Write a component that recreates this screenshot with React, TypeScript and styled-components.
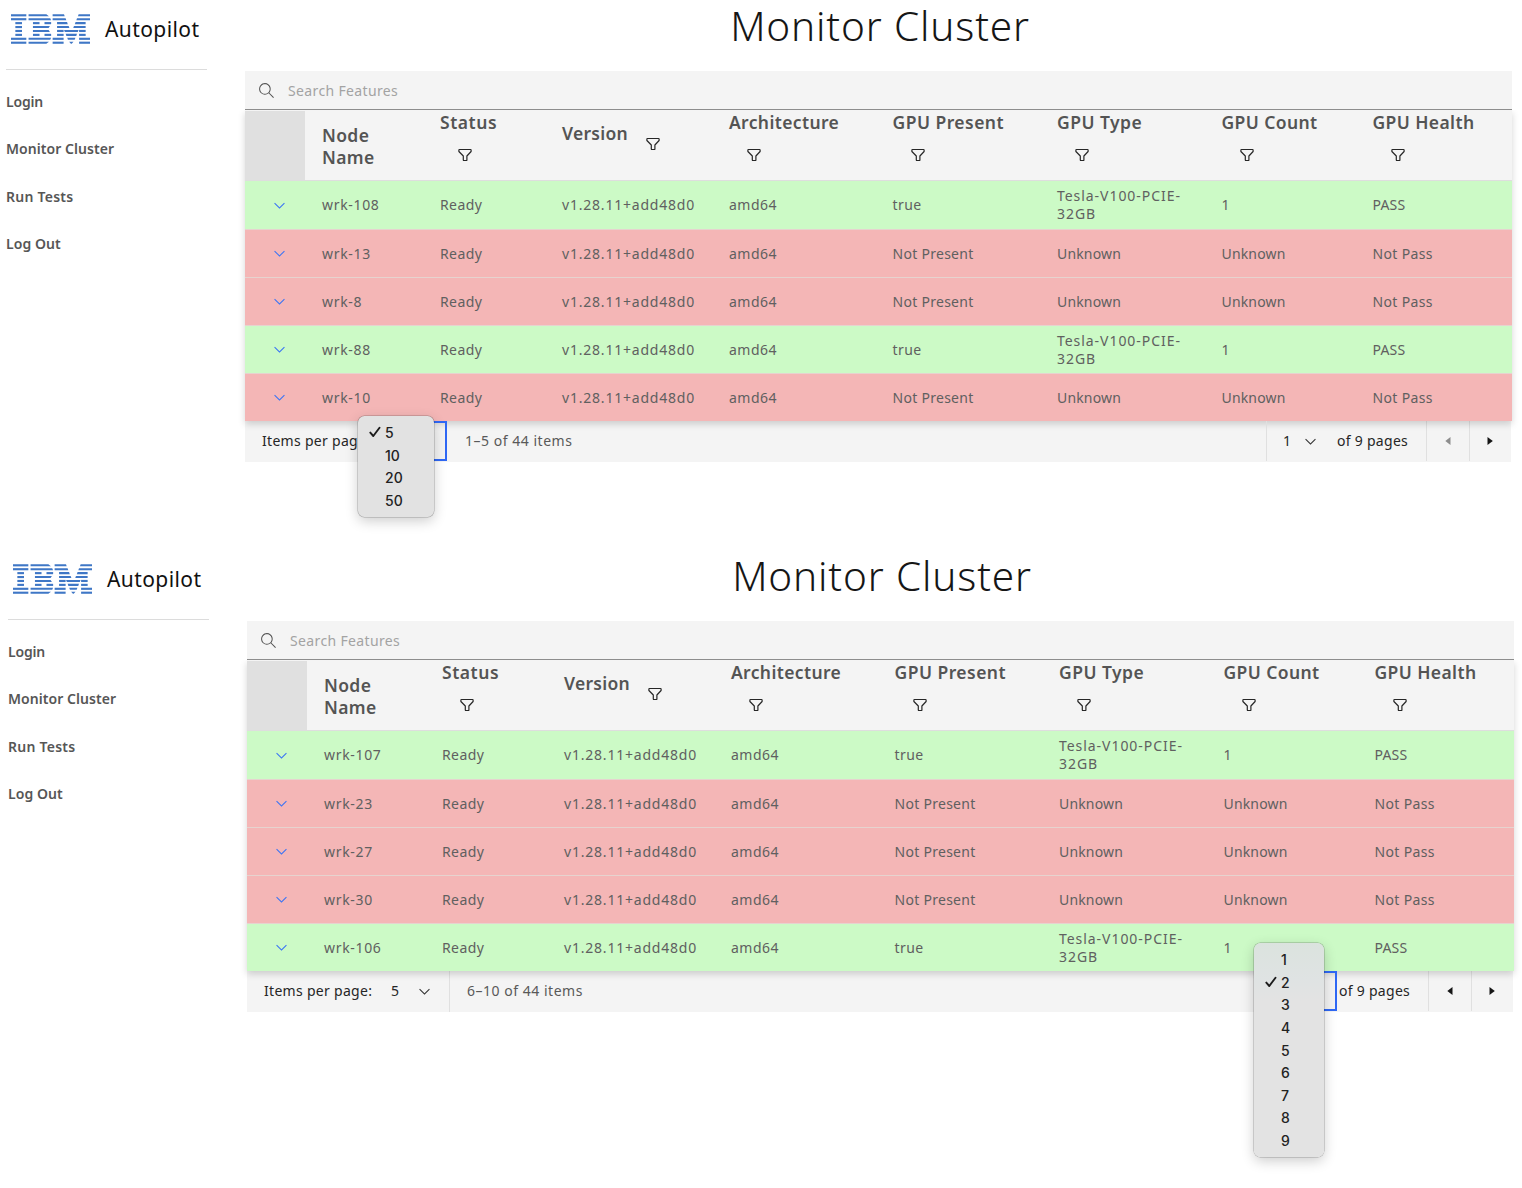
import React from "react";
import styled, { createGlobalStyle } from "styled-components";

const sans = `"Noto Sans", "Open Sans", sans-serif`;

const GlobalStyle = createGlobalStyle`
  *, *::before, *::after { box-sizing: border-box; }
  body { margin: 0; background: #fff; font-family: ${sans}; font-size: 14px; color: #161616; }
`;

const Page = styled.div`
  width: 1522px;
  height: 1188px;
  overflow: hidden;
`;

const Screen = styled.section<{ $indent: number; $height: number }>`
  display: grid;
  grid-template-columns: 201px 1267px;
  column-gap: 38px;
  height: ${p => p.$height}px;
  padding-left: ${p => 6 + p.$indent}px;
`;

/* Sidebar */
const Brand = styled.header`
  display: flex;
  align-items: center;
  height: 70px;
  padding: 0 0 11px 5px;
  border-bottom: 1px solid #dcdcdc;
  svg { flex: none; }
`;

const BrandName = styled.span`
  margin-left: 15px;
  font-size: 21px;
  letter-spacing: 0.42px;
  color: #111;
`;

const Nav = styled.nav`
  display: flex;
  flex-direction: column;
  padding-top: 8px;
`;

const NavLink = styled.a<{ $tracking?: number }>`
  height: 47.3px;
  line-height: 47.3px;
  font-size: 14px;
  font-weight: 600;
  letter-spacing: ${p => p.$tracking ?? 0}px;
  color: #565656;
`;

/* Main column */
const Title = styled.h1`
  margin: 0;
  height: 71px;
  padding-left: 3px;
  line-height: 52px;
  text-align: center;
  font-size: 40.5px;
  font-weight: 300;
  letter-spacing: 0.86px;
  color: #161616;
`;

const SearchBar = styled.div`
  display: flex;
  align-items: center;
  gap: 13px;
  height: 39px;
  padding-left: 13px;
  background: #f4f4f4;
  border-bottom: 1px solid #8d8d8d;
`;

const Placeholder = styled.span`
  letter-spacing: 0.36px;
  color: #a3a3a3;
`;

const Table = styled.div`
  position: relative;
  background: #f4f4f4;
  box-shadow: 0 3px 7px rgba(0, 0, 0, 0.17);
  clip-path: inset(0 -12px -14px -12px);
`;

const columns = "60px 118px 122px 167px 163.5px 164.5px 164.5px 151px 1fr";

const HeadRow = styled.div`
  display: grid;
  grid-template-columns: ${columns};
  height: 71px;
  padding-top: 1px;
  border-bottom: 1px solid #dedede;
`;

const ExpandHead = styled.div`
  background: #e0e0e0;
`;

const HeadCell = styled.div<{ $inline?: boolean }>`
  display: flex;
  flex-direction: ${p => (p.$inline ? "row" : "column")};
  gap: ${p => (p.$inline ? "17px" : "14px")};
  padding: ${p => (p.$inline ? "11px 0 0 17px" : "0 0 0 17px")};
`;

const HeadLabel = styled.span<{ $tracking: number }>`
  line-height: 22px;
  font-size: 17.5px;
  font-weight: 600;
  letter-spacing: ${p => p.$tracking}px;
  color: #545454;
`;

const NameHead = styled(HeadCell)`
  padding: 13px 60px 0 17px;
`;

const FilterSlot = styled.span<{ $inline?: boolean }>`
  display: block;
  height: 16px;
  margin: ${p => (p.$inline ? "14px 0 0 0" : "0 0 0 17px")};
  svg { display: block; }
`;

const Row = styled.div<{ $healthy: boolean }>`
  display: grid;
  grid-template-columns: ${columns};
  align-items: center;
  height: 48px;
  background: ${p => (p.$healthy ? "#ccfac6" : "#f4b6b6")};
  & + & { border-top: 1px solid #e6d3cf; }
`;

const ExpandCell = styled.div`
  display: flex;
  padding-left: 26px;
`;

const Cell = styled.div<{ $tracking: number }>`
  padding-left: 17px;
  line-height: 18px;
  letter-spacing: ${p => p.$tracking}px;
  color: #606060;
`;

/* Pagination */
const Pager = styled.footer`
  display: flex;
  width: 1266px;
  height: 40.5px;
  line-height: 40px;
  background: #f4f4f4;
  white-space: nowrap;
`;

const PerPage = styled.div<{ $open: boolean }>`
  display: flex;
  width: 203px;
  padding-left: 17px;
  border-right: 1px solid ${p => (p.$open ? "transparent" : "#e0e0e0")};
`;

const PagerLabel = styled.span<{ $width: number }>`
  width: ${p => p.$width}px;
  letter-spacing: 0.3px;
  color: #262626;
`;

const Range = styled.span`
  flex: 1;
  padding-left: 17px;
  letter-spacing: 0.52px;
  color: #595959;
`;

const SelectBox = styled.div<{ $width: number; $open: boolean; $divider?: boolean }>`
  position: relative;
  z-index: 2;
  display: flex;
  flex: none;
  align-items: center;
  justify-content: space-between;
  width: ${p => p.$width}px;
  height: 40px;
  padding: 0 16px;
  border-left: 1px solid ${p => (p.$divider ? "#e0e0e0" : "transparent")};
  box-shadow: ${p => (p.$open ? "inset 0 0 0 2px #2f68f5" : "none")};
  color: #262626;
`;

const Menu = styled.ul<{ $width: number; $top: number; $tint?: boolean }>`
  position: absolute;
  left: -15px;
  top: ${p => p.$top}px;
  width: ${p => p.$width}px;
  margin: 0;
  padding: 6px 0 5px;
  list-style: none;
  border-radius: 6.5px;
  background: ${p => (p.$tint ? "linear-gradient(#dbe3de, #dfe3e3 36px, #e3e3e3 58px)" : "#e2e2e2")};
  box-shadow: 0 0 0 0.5px rgba(0, 0, 0, 0.28), 0 4px 13px rgba(0, 0, 0, 0.2);
`;

const MenuItem = styled.li`
  display: grid;
  grid-template-columns: 16px 1fr;
  align-items: center;
  height: 22.6px;
  padding-left: 11px;
  line-height: 22px;
  font-family: Inter, "Liberation Sans", sans-serif;
  font-size: 14px;
  font-weight: 500;
  color: #222;
`;

const PageCount = styled.span`
  width: 91px;
  padding-left: 2px;
  letter-spacing: 0.28px;
  color: #262626;
`;

const PageButton = styled.span<{ $disabled?: boolean }>`
  display: flex;
  align-items: center;
  justify-content: center;
  width: 42.5px;
  height: 40px;
  border-left: 1px solid #e0e0e0;
  color: ${p => (p.$disabled ? "#8d8d8d" : "#161616")};
`;

/* Striped logo: bars per letter as [row, x1, x2, taper at x1, taper at x2] */
const bars: number[][] = [
  [0, 0, 194, 0, 0], [1, 0, 194, 0, 0], [2, 55, 139, 0, 0], [3, 55, 139, 0, 0],
  [4, 55, 139, 0, 0], [5, 55, 139, 0, 0], [6, 0, 194, 0, 0], [7, 0, 194, 0, 0],
  [0, 222, 448, 0, 32], [1, 222, 497, 0, 10], [2, 278, 361, 0, 0], [2, 424, 508, 0, 0],
  [3, 278, 492, 0, -16], [4, 278, 476, 0, 16], [5, 278, 361, 0, 0], [5, 424, 508, 0, 0],
  [6, 222, 507, 0, -10], [7, 222, 480, 0, -32],
  [0, 527, 671, 0, 9], [0, 856, 1000, -9, 0], [1, 527, 691, 0, 9], [1, 836, 1000, -9, 0],
  [2, 583, 710, 0, 9], [2, 817, 945, -9, 0], [3, 583, 730, 0, 9], [3, 797, 945, -9, 0],
  [4, 583, 666, 0, 0], [4, 672, 855, 9, -9], [4, 862, 945, 0, 0],
  [5, 583, 666, 0, 0], [5, 692, 835, 9, -9], [5, 862, 945, 0, 0],
  [6, 527, 666, 0, 0], [6, 712, 815, 9, -9], [6, 862, 1000, 0, 0],
  [7, 527, 666, 0, 0], [7, 736, 791, 22, -22], [7, 862, 1000, 0, 0],
];

const Logo = () => (
  <svg width="79" height="30" viewBox="0 0 1000 380" preserveAspectRatio="none" fill="#3f77c6">
    {bars.map(([r, a, b, ta, tb], i) => {
      const y = r * 49.6 + 3;
      return <path key={i} d={`M${a} ${y}H${b}L${b + tb} ${y + 27}H${a + ta}Z`} />;
    })}
  </svg>
);

const SearchIcon = () => (
  <svg width="17" height="17" viewBox="0 0 16 16" fill="#525252">
    <path d="M15,14.3L10.7,10c1.9-2.3,1.6-5.8-0.7-7.7S4.2,0.7,2.3,3S0.7,8.8,3,10.7c2,1.7,5,1.7,7,0l4.3,4.3L15,14.3z M2,6.5C2,4,4,2,6.5,2S11,4,11,6.5S9,11,6.5,11S2,9,2,6.5z" />
  </svg>
);

const Chevron = ({ color }: { color: string }) => (
  <svg width="17" height="17" viewBox="0 0 16 16" fill={color}>
    <path d="M8 11L3 6 3.7 5.3 8 9.6 12.3 5.3 13 6z" />
  </svg>
);

const FilterIcon = () => (
  <svg width="16" height="16" viewBox="0 0 16 16" fill="none" stroke="#262626" strokeWidth="1.2" strokeLinejoin="round">
    <path d="M2.5 2.5H13.5Q14.1 2.5 14.1 3.1V4.5L9.9 9V12.9Q9.9 13.5 9.3 13.5H7Q6.3 13.5 6.3 12.9V9L1.9 4.5V3.1Q1.9 2.5 2.5 2.5Z" />
  </svg>
);

const Check = () => (
  <svg width="12" height="12" viewBox="0 0 12 12" fill="none" stroke="#1c1c1c" strokeWidth="1.9" strokeLinecap="round" strokeLinejoin="round">
    <path d="M1.3 6.6L4.3 10L10.5 1.8" />
  </svg>
);

const Caret = ({ back }: { back?: boolean }) => (
  <svg width="6" height="8" viewBox="0 0 6 8" fill="currentColor">
    <path d={back ? "M5.5 0V8L0.3 4Z" : "M0.5 0V8L5.8 4Z"} />
  </svg>
);

const heads: [string, number][] = [
  ["Status", 0.55], ["Version", 0.28], ["Architecture", 0.36], ["GPU Present", 0.46],
  ["GPU Type", 0.46], ["GPU Count", 0.4], ["GPU Health", 0.4],
];

const tracking: Record<string, number> = {
  "v1.28.11+add48d0": 0.79, "Tesla-V100-PCIE-32GB": 0.95, amd64: 0.5, Unknown: 0.17,
  "Not Present": 0.28, "Not Pass": 0.35, PASS: 0.2, Ready: 0.4, true: 0.45,
};

type Node = { name: string; healthy: boolean };

const gpuNode = (name: string): Node => ({ name, healthy: true });
const bareNode = (name: string): Node => ({ name, healthy: false });

const describe = ({ name, healthy }: Node) => [
  name, "Ready", "v1.28.11+add48d0", "amd64",
  ...(healthy ? ["true", "Tesla-V100-PCIE-32GB", "1", "PASS"] : ["Not Present", "Unknown", "Unknown", "Not Pass"]),
];

function Options({ values, selected, width, top, tint }: { values: number[]; selected: number; width: number; top: number; tint?: boolean }) {
  return (
    <Menu $width={width} $top={top} $tint={tint}>
      {values.map(v => (
        <MenuItem key={v}>
          <span>{v === selected && <Check />}</span>
          <span>{v}</span>
        </MenuItem>
      ))}
    </Menu>
  );
}

type MonitorProps = { indent: number; height: number; nodes: Node[]; page: number; range: string; open: "size" | "page" };

function Monitor({ indent, height, nodes, page, range, open }: MonitorProps) {
  const sizeOpen = open === "size";
  return (
    <Screen $indent={indent} $height={height}>
      <aside>
        <Brand>
          <Logo />
          <BrandName>Autopilot</BrandName>
        </Brand>
        <Nav>
          <NavLink $tracking={-0.2}>Login</NavLink>
          <NavLink $tracking={0.05}>Monitor Cluster</NavLink>
          <NavLink $tracking={0.25}>Run Tests</NavLink>
          <NavLink $tracking={0.05}>Log Out</NavLink>
        </Nav>
      </aside>
      <main>
        <Title>Monitor Cluster</Title>
        <SearchBar>
          <SearchIcon />
          <Placeholder>Search Features</Placeholder>
        </SearchBar>
        <Table>
          <HeadRow>
            <ExpandHead />
            <NameHead>
              <HeadLabel $tracking={0.35}>Node Name</HeadLabel>
            </NameHead>
            {heads.map(([label, space]) => (
              <HeadCell key={label} $inline={label === "Version"}>
                <HeadLabel $tracking={space}>{label}</HeadLabel>
                <FilterSlot $inline={label === "Version"}><FilterIcon /></FilterSlot>
              </HeadCell>
            ))}
          </HeadRow>
          {nodes.map(node => (
            <Row key={node.name} $healthy={node.healthy}>
              <ExpandCell><Chevron color="#3a74f5" /></ExpandCell>
              {describe(node).map((text, i) => (
                <Cell key={i} $tracking={tracking[text] ?? 0.67}>
                  {text.startsWith("Tesla") ? <>Tesla-V100-PCIE-<br />32GB</> : text}
                </Cell>
              ))}
            </Row>
          ))}
        </Table>
        <Pager>
          <PerPage $open={sizeOpen}>
            <PagerLabel $width={110}>Items per page:</PagerLabel>
            <SelectBox $width={75} $open={sizeOpen}>
              <span>5</span>
              <Chevron color="#333" />
              {sizeOpen && <Options values={[5, 10, 20, 50]} selected={5} width={76} top={-5} />}
            </SelectBox>
          </PerPage>
          <Range>{range}</Range>
          <SelectBox $width={69} $open={!sizeOpen} $divider>
            <span>{page}</span>
            <Chevron color="#333" />
            {!sizeOpen && <Options values={[1, 2, 3, 4, 5, 6, 7, 8, 9]} selected={2} width={70} top={-28} tint />}
          </SelectBox>
          <PageCount>of 9 pages</PageCount>
          <PageButton $disabled={page === 1}><Caret back /></PageButton>
          <PageButton><Caret /></PageButton>
        </Pager>
      </main>
    </Screen>
  );
}

export default function App() {
  return (
    <Page>
      <GlobalStyle />
      <Monitor
        indent={0}
        height={550}
        nodes={[gpuNode("wrk-108"), bareNode("wrk-13"), bareNode("wrk-8"), gpuNode("wrk-88"), bareNode("wrk-10")]}
        page={1}
        range="1–5 of 44 items"
        open="size"
      />
      <Monitor
        indent={2}
        height={638}
        nodes={[gpuNode("wrk-107"), bareNode("wrk-23"), bareNode("wrk-27"), bareNode("wrk-30"), gpuNode("wrk-106")]}
        page={2}
        range="6–10 of 44 items"
        open="page"
      />
    </Page>
  );
}
